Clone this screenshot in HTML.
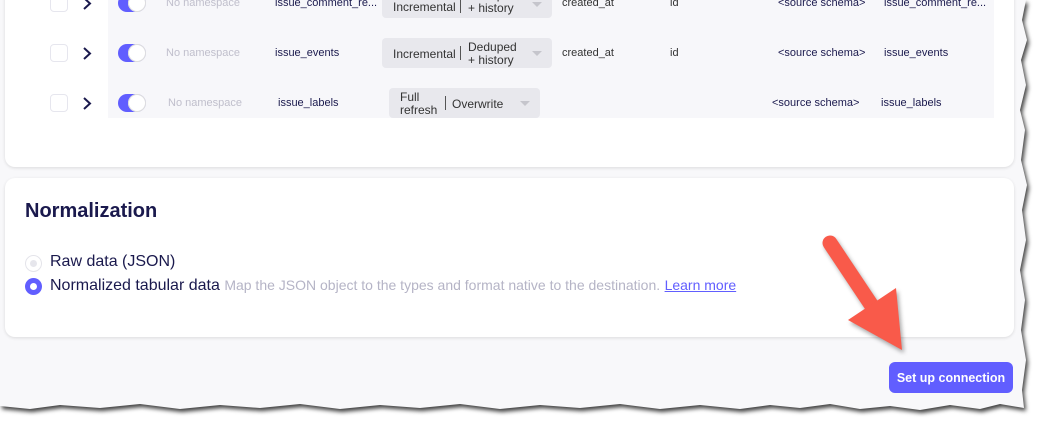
<!DOCTYPE html>
<html><head><style>
body{margin:0;width:1044px;height:423px;background:#fff;overflow:hidden;font-family:"Liberation Sans",sans-serif;position:relative}
#wrap{position:absolute;left:0;top:0;width:1044px;height:423px;filter:drop-shadow(2px 3px 2px rgba(0,0,0,.75))}
#page{position:absolute;left:0;top:0;width:1044px;height:423px;background:#f8f8fa;
clip-path:polygon(0 0,1026px 0,1022px 20px,1027px 40px,1021px 60px,1026px 85px,1020px 110px,1025px 130px,1021px 160px,1027px 185px,1022px 210px,1026px 240px,1020px 270px,1025px 300px,1021px 330px,1026px 360px,1022px 390px,1024px 408px,1000px 404px,980px 409px,950px 405px,920px 410px,890px 406px,860px 409px,830px 404px,800px 408px,770px 405px,740px 409px,700px 405px,660px 409px,620px 404px,580px 408px,540px 405px,500px 409px,460px 404px,420px 408px,380px 405px,340px 409px,300px 404px,260px 408px,220px 405px,180px 409px,140px 404px,100px 408px,60px 405px,30px 409px,0 406px)}
.card{position:absolute;background:#fff;border-radius:10px;box-shadow:0 1px 3px rgba(0,0,0,.12)}
.t{position:absolute;font-size:11px;color:#1a194d;white-space:nowrap}
.g{color:#c0bfcc}
.cb{position:absolute;width:16px;height:16px;border:1px solid #e6e6ee;border-radius:4px;background:#fff;left:50px}
.chev{position:absolute;left:82px}
.tog{position:absolute;left:118px;width:28px;height:18px;border-radius:9px;background:#615eff}
.tog:after{content:"";position:absolute;right:0;top:0;width:18px;height:18px;border-radius:50%;background:#fff;box-shadow:0 0 0 1px #ddd inset}
.sel{position:absolute;background:#e8e8ed;border-radius:4px;font-size:12px;color:#333;}
</style></head><body>
<div id="wrap"><div id="page">
<div class="card" style="left:5px;top:-20px;width:1009px;height:187px"></div>
<div style="position:absolute;left:108px;top:0;width:886px;height:118px;background:#f7f7fa"></div>

<div class="cb" style="top:-6px"></div><svg class="chev" style="top:-3px" width="10" height="13"><path d="M2 1l6 5.5-6 5.5" fill="none" stroke="#1a194d" stroke-width="2"/></svg><div class="tog" style="top:-6px"></div>
<div class="cb" style="top:44px"></div><svg class="chev" style="top:47px" width="10" height="13"><path d="M2 1l6 5.5-6 5.5" fill="none" stroke="#1a194d" stroke-width="2"/></svg><div class="tog" style="top:44px"></div>
<div class="cb" style="top:94px"></div><svg class="chev" style="top:97px" width="10" height="13"><path d="M2 1l6 5.5-6 5.5" fill="none" stroke="#1a194d" stroke-width="2"/></svg><div class="tog" style="top:94px"></div>

<div class="t g" style="left:166px;top:-3px">No namespace</div>
<div class="t" style="left:275px;top:-3px">issue_comment_re...</div>
<div class="sel" style="left:382px;top:-12px;width:170px;height:30px"><span style="position:absolute;left:11px;top:12px">Incremental</span><span style="position:absolute;left:78px;top:11px;height:14px;border-left:1px solid #555"></span><span style="position:absolute;left:86px;top:1px;line-height:13px">Deduped<br>+ history</span><span style="position:absolute;right:10px;top:14px;border:5px solid transparent;border-top-color:#c5c5cc"></span></div>
<div class="t" style="left:562px;top:-3px;color:#333">created_at</div>
<div class="t" style="left:670px;top:-3px;color:#333">id</div>
<div class="t" style="left:778px;top:-3px">&lt;source schema&gt;</div>
<div class="t" style="left:884px;top:-3px">issue_comment_re...</div>

<div class="t g" style="left:166px;top:47px">No namespace</div>
<div class="t" style="left:275px;top:47px">issue_events</div>
<div class="sel" style="left:382px;top:38px;width:170px;height:30px"><span style="position:absolute;left:11px;top:9px">Incremental</span><span style="position:absolute;left:78px;top:8px;height:14px;border-left:1px solid #555"></span><span style="position:absolute;left:86px;top:3px;line-height:13px">Deduped<br>+ history</span><span style="position:absolute;right:10px;top:13px;border:5px solid transparent;border-top-color:#c5c5cc"></span></div>
<div class="t" style="left:562px;top:47px;color:#333">created_at</div>
<div class="t" style="left:670px;top:47px;color:#333">id</div>
<div class="t" style="left:778px;top:47px">&lt;source schema&gt;</div>
<div class="t" style="left:884px;top:47px">issue_events</div>

<div class="t g" style="left:168px;top:97px">No namespace</div>
<div class="t" style="left:278px;top:97px">issue_labels</div>
<div class="sel" style="left:389px;top:88px;width:151px;height:30px"><span style="position:absolute;left:11px;top:3px;line-height:13px">Full<br>refresh</span><span style="position:absolute;left:56px;top:8px;height:14px;border-left:1px solid #555"></span><span style="position:absolute;left:63px;top:9px">Overwrite</span><span style="position:absolute;right:10px;top:13px;border:5px solid transparent;border-top-color:#c5c5cc"></span></div>
<div class="t" style="left:772px;top:97px">&lt;source schema&gt;</div>
<div class="t" style="left:881px;top:97px">issue_labels</div>

<div class="card" style="left:5px;top:178px;width:1009px;height:159px"></div>
<div class="t" style="left:25px;top:200px;font-size:20px;font-weight:bold">Normalization</div>
<div style="position:absolute;left:25px;top:255px;width:15px;height:15px;border:1px solid #e4e4ea;border-radius:50%;background:#fff"><div style="position:absolute;left:4px;top:4px;width:7px;height:7px;border-radius:50%;background:#e6e6ec"></div></div>
<div class="t" style="left:50px;top:253px;font-size:16px">Raw data (JSON)</div>
<div style="position:absolute;left:25px;top:278px;width:17px;height:17px;border-radius:50%;background:#615eff"><div style="position:absolute;left:5px;top:5px;width:7px;height:7px;border-radius:50%;background:#fff"></div></div>
<div class="t" style="left:50px;top:277px;font-size:16px">Normalized tabular data <span style="font-size:14px;color:#b5b4c6">Map the JSON object to the types and format native to the destination.</span> <span style="font-size:14px;color:#615eff;text-decoration:underline">Learn more</span></div>

<div style="position:absolute;left:889px;top:362px;width:124px;height:31px;border-radius:6px;background:#615eff;color:#fff;font-size:12.5px;font-weight:bold;text-align:center;line-height:32px">Set up connection</div>

<svg style="position:absolute;left:0;top:0" width="1044" height="423"><g style="filter:drop-shadow(2px 3px 2px rgba(0,0,0,.35))">
<line x1="830" y1="243" x2="880" y2="318" stroke="#f95a4a" stroke-width="15" stroke-linecap="round"/>
<polygon points="896,288 902,350 848,320" fill="#f95a4a"/></g></svg>
</div></div>
</body></html>
